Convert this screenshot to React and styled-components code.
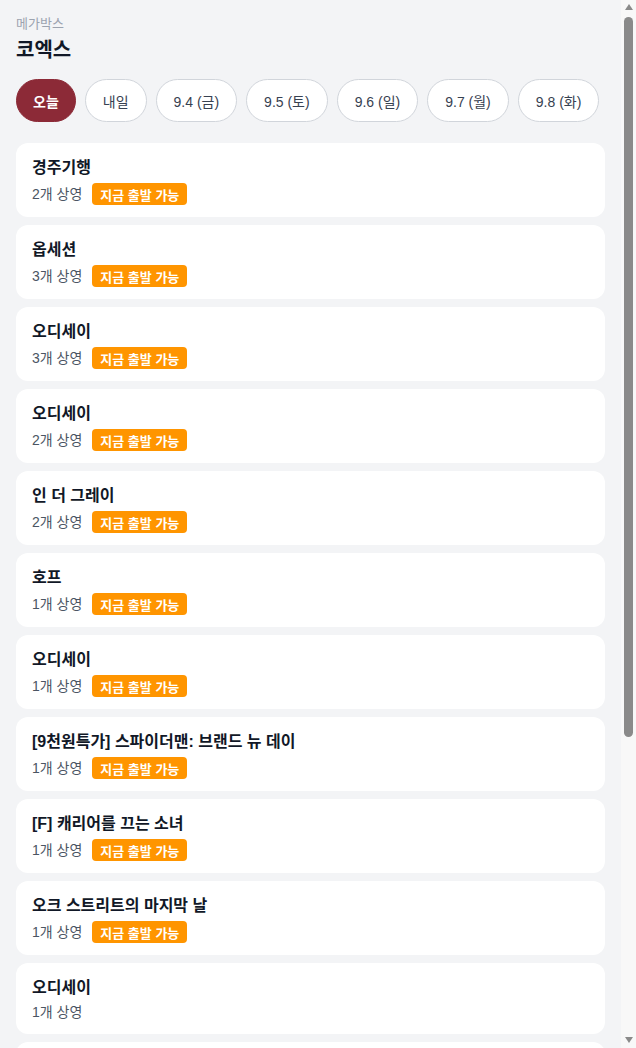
import styled, { createGlobalStyle } from "styled-components"

const GlobalStyle = createGlobalStyle`
    html, body {
        margin: 0;
        padding: 0;
        background: #f3f4f6;
        font-family: "Liberation Sans", "Noto Sans CJK KR", sans-serif;
        color: #111827;
    }
    * { box-sizing: border-box; }
`

const dates = ['오늘', '내일', '9.4 (금)', '9.5 (토)', '9.6 (일)', '9.7 (월)', '9.8 (화)']

const movies = [
    { title: '경주기행', count: 2, now: true },
    { title: '옵세션', count: 3, now: true },
    { title: '오디세이', count: 3, now: true },
    { title: '오디세이', count: 2, now: true },
    { title: '인 더 그레이', count: 2, now: true },
    { title: '호프', count: 1, now: true },
    { title: '오디세이', count: 1, now: true },
    { title: '[9천원특가] 스파이더맨: 브랜드 뉴 데이', count: 1, now: true },
    { title: '[F] 캐리어를 끄는 소녀', count: 1, now: true },
    { title: '오크 스트리트의 마지막 날', count: 1, now: true },
    { title: '오디세이', count: 1, now: false },
    { title: '오디세이', count: 1, now: false },
    { title: '오디세이', count: 1, now: false },
]

const App = () => {
    return (
        <>
            <GlobalStyle />
            <Page>
                <Brand>메가박스</Brand>
                <Theater>코엑스</Theater>

                <DateRow>
                    {dates.map((d, i) => (
                        <DateChip key={d} $active={i === 0}>{d}</DateChip>
                    ))}
                </DateRow>

                <MovieList>
                    {movies.map((m, i) => (
                        <MovieCard key={i}>
                            <MovieTitle>{m.title}</MovieTitle>
                            <MetaRow>
                                <Count>{m.count}개 상영</Count>
                                {m.now && <NowBadge>지금 출발 가능</NowBadge>}
                            </MetaRow>
                        </MovieCard>
                    ))}
                </MovieList>
            </Page>

            {/* window scrollbar, drawn since the headless page hides its own */}
            <ScrollRail>
                <Arrow $dir="up" />
                <Track>
                    <Thumb />
                </Track>
                <Arrow $dir="down" />
            </ScrollRail>
        </>
    )
}

export default App

const Page = styled.main`
    padding: 16px 31px 24px 16px;
`

const Brand = styled.div`
    font-size: 13px;
    line-height: 16px;
    color: #9ca3af;
`

const Theater = styled.h1`
    margin: 4px 0 0;
    font-size: 20px;
    line-height: 28px;
    font-weight: 700;
    color: #111827;
`

const DateRow = styled.div`
    display: flex;
    gap: 9px;
    margin-top: 15px;
    overflow-x: auto;
    white-space: nowrap;
    scrollbar-width: none;
`

const DateChip = styled.button`
    flex: none;
    height: 43px;
    padding: ${p => p.$active ? '0 16px' : '0 17px'};
    border-radius: 999px;
    border: 1px solid ${p => p.$active ? '#8c2a37' : '#d1d5db'};
    background: ${p => p.$active ? '#8c2a37' : '#fff'};
    color: ${p => p.$active ? '#fff' : '#374151'};
    font-family: inherit;
    font-size: 14px;
    font-weight: ${p => p.$active ? 700 : 400};
    cursor: pointer;
`

const MovieList = styled.div`
    display: flex;
    flex-direction: column;
    gap: 8px;
    margin-top: 21px;
`

const MovieCard = styled.div`
    background: #fff;
    border-radius: 12px;
    padding: 14px 16px 12px;
    display: flex;
    flex-direction: column;
    gap: 4px;
`

const MovieTitle = styled.div`
    font-size: 16px;
    line-height: 22px;
    font-weight: 700;
    color: #111827;
`

const MetaRow = styled.div`
    display: flex;
    align-items: center;
    gap: 10px;
    min-height: 19px;
`

const Count = styled.span`
    font-size: 14px;
    line-height: 19px;
    color: #4b5563;
`

const NowBadge = styled.span`
    display: inline-flex;
    align-items: center;
    height: 22px;
    padding: 0 8px;
    border-radius: 4px;
    background: #ff9500;
    color: #fff;
    font-size: 13px;
    font-weight: 700;
`

const ScrollRail = styled.div`
    position: fixed;
    top: 0;
    right: 0;
    width: 15px;
    height: 100vh;
    background: #f8f8f8;
    display: flex;
    flex-direction: column;
    align-items: center;
`

const Arrow = styled.div`
    flex: none;
    width: 0;
    height: 0;
    margin: ${p => p.$dir === 'up' ? '4px 0 5px' : '5px 0 5px'};
    border-left: 4.5px solid transparent;
    border-right: 4.5px solid transparent;
    ${p => p.$dir === 'up'
        ? 'border-bottom: 6px solid #8a8a8a;'
        : 'border-top: 6px solid #8a8a8a;'}
`

const Track = styled.div`
    flex: 1;
    width: 100%;
    display: flex;
    justify-content: center;
    padding-top: 2px;
`

const Thumb = styled.div`
    width: 9px;
    height: 720px;
    border-radius: 5px;
    background: #8a8a8a;
`
